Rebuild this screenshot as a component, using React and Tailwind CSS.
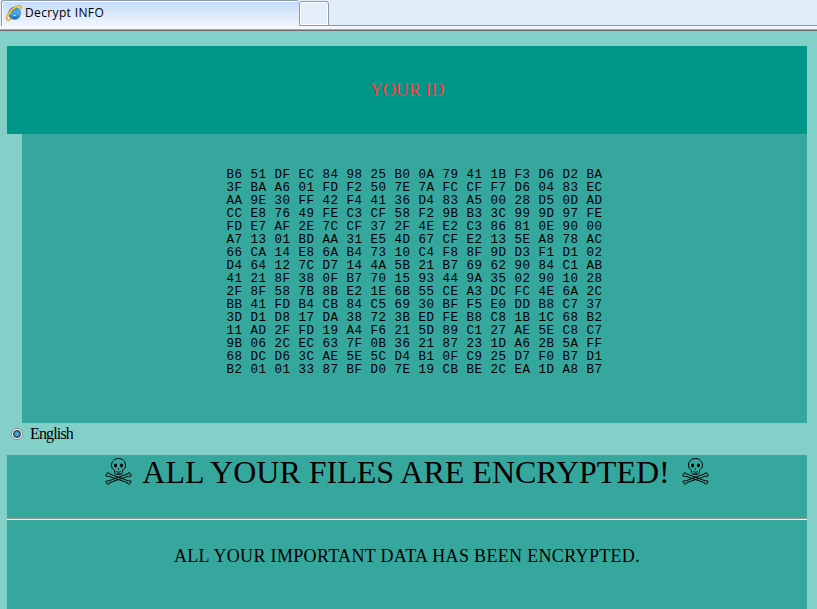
const ID_ROWS = [
  "B6 51 DF EC 84 98 25 B0 0A 79 41 1B F3 D6 D2 BA",
  "3F BA A6 01 FD F2 50 7E 7A FC CF F7 D6 04 83 EC",
  "AA 9E 30 FF 42 F4 41 36 D4 83 A5 00 28 D5 0D AD",
  "CC E8 76 49 FE C3 CF 58 F2 9B B3 3C 99 9D 97 FE",
  "FD E7 AF 2E 7C CF 37 2F 4E E2 C3 86 81 0E 90 00",
  "A7 13 01 BD AA 31 E5 4D 67 CF E2 13 5E A8 78 AC",
  "66 CA 14 E8 6A B4 73 10 C4 F8 8F 9D D3 F1 D1 02",
  "D4 64 12 7C D7 14 4A 5B 21 B7 69 62 90 84 C1 AB",
  "41 21 8F 38 0F B7 70 15 93 44 9A 35 02 90 10 28",
  "2F 8F 58 7B 8B E2 1E 6B 55 CE A3 DC FC 4E 6A 2C",
  "BB 41 FD B4 CB 84 C5 69 30 BF F5 E0 DD B8 C7 37",
  "3D D1 D8 17 DA 38 72 3B ED FE B8 C8 1B 1C 68 B2",
  "11 AD 2F FD 19 A4 F6 21 5D 89 C1 27 AE 5E C8 C7",
  "9B 06 2C EC 63 7F 0B 36 21 87 23 1D A6 2B 5A FF",
  "68 DC D6 3C AE 5E 5C D4 B1 0F C9 25 D7 F0 B7 D1",
  "B2 01 01 33 87 BF D0 7E 19 CB BE 2C EA 1D A8 B7",
];

function BrowserIcon() {
  return (
    <svg className="mt-[4px] h-4 w-4 shrink-0" viewBox="0 0 16 16" fill="none">
      <defs>
        <linearGradient id="eBlue" x1="0" y1="0" x2="0" y2="1">
          <stop offset="0" stopColor="#2f9be0" />
          <stop offset="0.5" stopColor="#45bdf2" />
          <stop offset="1" stopColor="#1568b8" />
        </linearGradient>
      </defs>
      <path
        d="M8.400 2.400a5.900 5.900 0 1 0 5.700 8.200h-3.800a2.300 2.300 0 0 1-4-1.400h8.200c.3-3.900-2.300-6.800-6.100-6.800ZM6.300 6.900a2.200 2.200 0 0 1 4.300 0Z"
        fill="url(#eBlue)"
        stroke="#1763ae"
        strokeWidth="0.7"
      />
      <path
        d="M14.200 4.800C15.400 1.700 14 .3 11 1.400 6.800 2.900 2 8 1 12c-.8 3 1.200 3.700 4.200 2"
        stroke="#d19a26"
        strokeWidth="1.900"
      />
      <path
        d="M14.200 4.300C14.900 2 13.700.9 11 1.600 6.900 3.200 2.300 8 1.300 12c-.6 2.500.9 3 3.300 2"
        stroke="#fbd04a"
        strokeWidth="1.100"
      />
    </svg>
  );
}

function Skull() {
  return (
    <svg
      className="mt-[3px] h-[28px] w-[27px] shrink-0"
      viewBox="0 0 27 28"
      fill="none"
      stroke="#000"
      strokeWidth="1"
      strokeLinejoin="round"
    >
      <path d="M9.500 12.200C7.500 11.200 6.500 9.500 6.500 7.300 6.500 3.500 9.300.5 13.500.5s7 3 7 6.800c0 2.200-1 3.900-3 4.900v2.300c0 1.200-1.500 2-4 2s-4-.8-4-2Z" />
      <path d="M11 13.500c1.500.8 3.500.8 5 0" strokeWidth="0.800" />
      <path d="M11.800 15.200h3.400" strokeWidth="0.600" />
      <ellipse cx="10.500" cy="7.400" rx="1.500" ry="2" fill="#000" stroke="none" />
      <ellipse cx="16.500" cy="7.400" rx="1.500" ry="2" fill="#000" stroke="none" />
      <path d="M13.500 9.500l-.8 2h1.600Z" fill="#000" stroke="none" />
      <path d="M4 15.700 23.400 22.900c1.200-.6 2.600-.2 2.700.7 0 .8-.6 1.100-1.300 1 .3 1.100-.4 1.900-1.300 1.700-.9-.2-1.200-.9-1-1.600L3.400 18.100c-1 .6-2.500.4-2.700-.5-.1-.7.400-1.200 1.200-1.200-.2-1 .2-1.800 1-1.800.700 0 1.100.5 1.100 1.100Z" />
      <path d="M23 15.700 3.600 22.900c-1.200-.6-2.600-.2-2.700.7 0 .8.600 1.100 1.300 1-.3 1.100.4 1.900 1.300 1.700.9-.2 1.200-.9 1-1.600l19.100-6.600c1 .6 2.500.4 2.700-.5.100-.7-.4-1.200-1.200-1.200.2-1-.2-1.800-1-1.800-.700 0-1.100.5-1.100 1.100Z" />
    </svg>
  );
}

function TabBar() {
  return (
    <header className="h-[31px] shrink-0 border-b border-[#6b6b6b] bg-[#f3f6fb]">
      <div className="flex h-[30px] flex-col border-b border-[#a5a9ad]">
        <div className="flex h-[26px] bg-[#e1edf9]">
          <div className="ml-px flex h-[26px] w-[298px] rounded-t-[3px] border-t border-l border-[#8e99a6] bg-linear-to-b from-[#c3dcfb] to-[#f0f5fc] pl-1 shadow-[inset_1px_1px_0_#fff]">
            <BrowserIcon />
            <span className="ml-[3px] pt-[3px] font-['Open_Sans','Noto_Sans',sans-serif] text-[12px] leading-[18px] tracking-[0.360px] text-black">
              Decrypt INFO
            </span>
          </div>
          <div className="mt-px h-[25px] w-[30px] rounded-t-[3px] border border-[#8e99a6] bg-[#e5effa] shadow-[inset_0_0_0_1px_#fff]" />
          <div className="h-[26px] flex-1 border-b border-[#8e99a6]" />
        </div>
      </div>
    </header>
  );
}

export default function App() {
  return (
    <div className="flex h-[609px] w-[817px] flex-col overflow-hidden bg-[#83d0c8] font-['Liberation_Serif','Times_New_Roman',serif] text-black">
      <TabBar />
      <main className="ml-[7px] flex w-[800px] flex-1 flex-col pt-[15px]">
        <h2 className="flex h-[88px] shrink-0 items-center justify-center bg-[#009688] text-[18px] text-[#ff3b3b]">
          YOUR ID
        </h2>
        <section className="ml-[15px] flex h-[289px] shrink-0 justify-center bg-[#36a79d] pt-[35px]">
          <pre className="font-['Liberation_Mono','Courier_New',monospace] text-[12.500px] leading-[13px] tracking-[0.500px]">
            {ID_ROWS.join("\n")}
          </pre>
        </section>
        <div className="flex h-[32px] shrink-0 pl-1">
          <span className="mt-[5px] flex h-3 w-3 items-center justify-center rounded-full border border-[#858b90] bg-[#f4f4f4]">
            <span className="h-[8px] w-[8px] rounded-full border border-[#17324a] bg-radial from-[#5cc4ef] to-[#174f7a]" />
          </span>
          <span className="ml-[7px] pt-px text-[16px] leading-[20px] tracking-[-0.850px]">English</span>
        </div>
        <section className="flex-1 bg-[#36a79d]">
          <h1 className="flex h-[63px] justify-center text-[32px] leading-[34px]">
            <Skull />
            <span className="mr-[12px] ml-[10px] whitespace-nowrap">ALL YOUR FILES ARE ENCRYPTED!</span>
            <Skull />
          </h1>
          <hr className="h-[2px] border-t border-b border-t-[#9a9a9a] border-b-[#eeeeee]" />
          <p className="pt-[26px] text-center text-[18px] leading-[20px] tracking-[0.330px]">
            ALL YOUR IMPORTANT DATA HAS BEEN ENCRYPTED.
          </p>
        </section>
      </main>
    </div>
  );
}
